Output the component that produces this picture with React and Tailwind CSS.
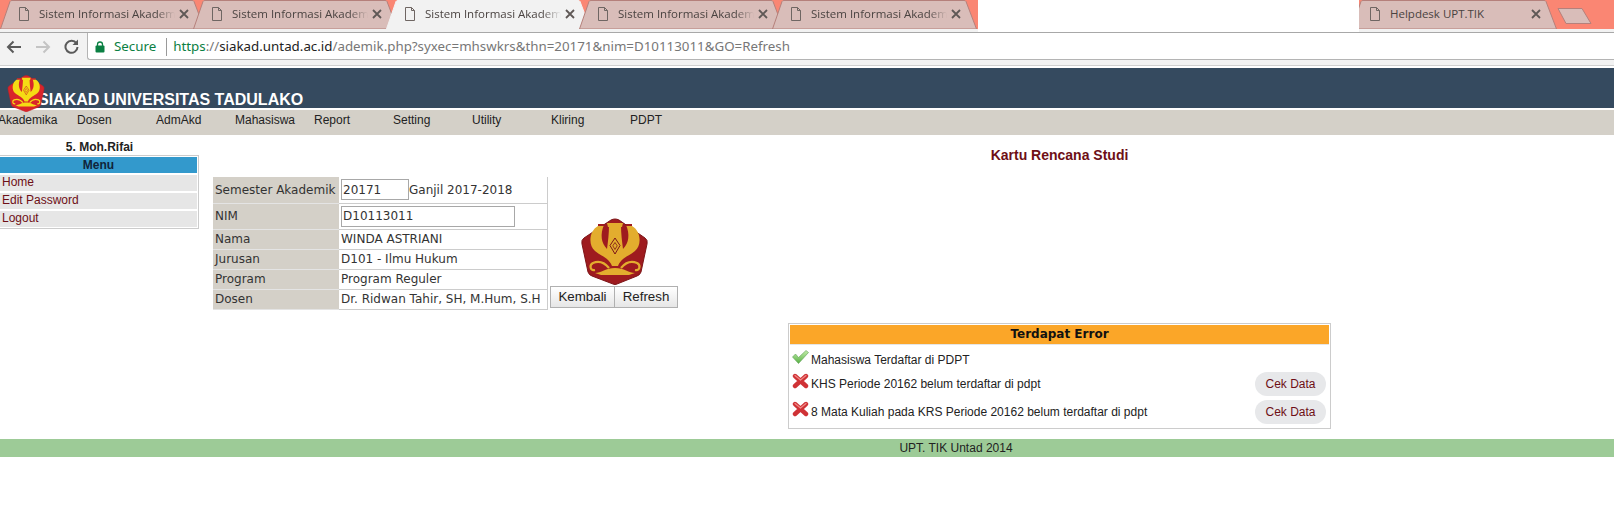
const tabs = ["a", "b", "c", "d", "e"];
const menu = ["Akademika", "Dosen", "AdmAkd", "Mahasiswa", "Report", "Setting", "Utility", "Kliring", "PDPT"];

function PageIcon({ color = "#6f6663" }) {
  return (
    <svg width="12" height="14" viewBox="0 0 12 14" fill="none" stroke={color} strokeWidth="1" className="shrink-0">
      <path d="M1.5 0.5H7.5L10.5 3.5V13.5H1.5Z" />
      <path d="M7.5 0.5V3.5H10.5" />
    </svg>
  );
}

function Tab({ title, active, width = 205, fade = true }) {
  const fill = active ? "#f2f2f2" : "#d9bdb9";
  const line = active ? "#f2f2f2" : "#b5807b";
  return (
    <div className="relative h-[29px] shrink-0 -mr-[12px]" style={{ width }}>
      <svg className="absolute inset-0" width={width} height="29" viewBox={`0 0 ${width} 29`}>
        <path d={`M0.5 29 L10 1.5 Q10.5 0.5 12 0.5 H${width - 13} Q${width - 11.5} 0.5 ${width - 11} 1.5 L${width - 0.5} 29Z`} fill={fill} stroke={line} />
      </svg>
      <div className="relative flex items-center h-full pl-[18px] pr-[14px] pb-[1px]">
        <PageIcon />
        <div
          className={
            "ml-[9px] w-[136px] text-[11.5px] leading-none text-[#4a4341] font-['Open_Sans',sans-serif] whitespace-nowrap" +
            (fade ? " [mask-image:linear-gradient(to_right,black_86%,transparent)]" : "")
          }
        >
          {title}
        </div>
        <svg width="10" height="10" viewBox="0 0 10 10" stroke="#5f5856" strokeWidth="1.8" className="ml-auto mr-[2px]">
          <path d="M1 1L9 9M9 1L1 9" />
        </svg>
      </div>
    </div>
  );
}

function Logo({ className, base, gold, slot }) {
  return (
    <svg viewBox="0 0 67 67" className={className}>
      <path d="M34 1 Q36 1 38 2 L64 20 Q67 22 66 26 L60 54 Q59 57 56 58 L36 66 Q34 67 32 66 L11 58 Q8 57 7 54 L1 26 Q0 22 3 20 L30 2 Q32 1 34 1Z" fill={base} stroke={slot} strokeWidth="1" />
      {/* arms and body as one shape */}
      <path d="M17 8 C8 13 7 27 14 33 C20 38 28 40 31 48 H37 C40 40 48 38 54 33 C61 27 60 13 51 8Z" fill={gold} />
      {/* slots between the arms and the vase */}
      <path d="M23 7 C19 16 20 25 26 31 C27 23 28 16 28 7Z" fill={base} />
      <path d="M45 7 C49 16 48 25 42 31 C41 23 40 16 40 7Z" fill={base} />
      {/* neck */}
      <path d="M26 5 H42 L41 9 H27Z" fill={gold} />
      <path d="M17 6 H23 V8 H17Z M45 6 H51 V8 H45Z" fill={base} />
      <path d="M34 20 L39 27.500 L34 36 L29 27.500Z" fill="none" stroke={slot} strokeWidth="1" />
      <path d="M34 24.500 L36.200 27.800 L34 31.500 L31.800 27.800Z" fill="none" stroke={slot} strokeWidth="0.8" />
      {/* curls and base */}
      <path d="M28 50 C23 44 17 43 12 45 C8 47 9 53 14 52 M40 50 C45 44 51 43 56 45 C60 47 59 53 54 52" fill="none" stroke={gold} strokeWidth="2.2" />
      <path d="M14 55 C20 55 25 50 34 50 C43 50 48 55 54 55 L48 57 H20Z" fill={gold} />
    </svg>
  );
}

function CheckIcon() {
  return (
    <svg width="17" height="14" viewBox="0 0 17 14" className="shrink-0">
      <defs>
        <linearGradient id="chk" x1="0" y1="0" x2="0" y2="1">
          <stop offset="0" stopColor="#c4eeaa" />
          <stop offset="1" stopColor="#56b044" />
        </linearGradient>
      </defs>
      <path d="M0.500 7 L3.500 4 L6.500 7.500 L14 0.500 L16.500 2.500 L6.500 13.500Z" fill="url(#chk)" stroke="#5f9f55" strokeWidth="0.6" />
    </svg>
  );
}

function CrossIcon() {
  return (
    <svg width="17" height="16" viewBox="0 0 17 16" className="shrink-0">
      <path d="M3 3L14 13M14 3L3 13" stroke="#cf3236" strokeWidth="4.4" strokeLinecap="round" />
      <path d="M3 2.500L8.500 7M14 2.500L8.500 7" stroke="#f08a86" strokeWidth="1.2" strokeLinecap="round" />
    </svg>
  );
}

function Toolbar() {
  return (
    <div className="h-[33px] flex bg-[#f2f2f2] border-b border-[#d0d0d0]">
      <div className="w-[87px] shrink-0 flex items-center pl-[6px] gap-[13px] pb-[5px]">
        <svg width="16" height="14" viewBox="0 0 16 14" fill="none" stroke="#5a5a5a" strokeWidth="2">
          <path d="M15 7H2M7.500 1.500L2 7L7.500 12.500" />
        </svg>
        <svg width="16" height="14" viewBox="0 0 16 14" fill="none" stroke="#c4c4c4" strokeWidth="2">
          <path d="M1 7H14M8.500 1.500L14 7L8.500 12.500" />
        </svg>
        <svg width="15" height="15" viewBox="0 0 15 15" fill="none" stroke="#5a5a5a" strokeWidth="2">
          <path d="M12.500 4.500A6 6 0 1 0 13.500 8" />
          <path d="M14 0.500V6H8.500Z" fill="#5a5a5a" stroke="none" />
        </svg>
      </div>
      <div className="flex-1 h-[27px] bg-white border-b border-l border-[#b4b4b4] rounded-bl-[3px] flex items-center pl-[7px] pt-[2px] font-['Noto_Sans',sans-serif] text-[13.33px] whitespace-nowrap">
        <svg width="10" height="12" viewBox="0 0 10 12" className="shrink-0 mr-[9px]">
          <rect x="0.500" y="4.500" width="9" height="7" rx="1" fill="#0b8043" />
          <path d="M2.500 5V3.500A2.500 2.500 0 0 1 7.500 3.500V5" fill="none" stroke="#0b8043" strokeWidth="1.300" />
        </svg>
        <span className="text-[#0b8043]">Secure</span>
        <span className="w-px h-[18px] bg-[#9a9a9a] ml-[10px] mr-[6px]"></span>
        <span className="text-[#0b8043]">https</span>
        <span className="text-[#777]">://</span>
        <span className="text-[#222]">siakad.untad.ac.id</span>
        <span className="text-[#777]">/ademik.php?syxec=mhswkrs&amp;thn=20171&amp;nim=D10113011&amp;GO=Refresh</span>
      </div>
    </div>
  );
}

function TabStrip() {
  return (
    <div className="h-[33px] bg-[#f2f2f2] border-b border-[#a8a8a8] flex items-start overflow-hidden">
      <div className="flex h-[29px] w-[978px] shrink-0 bg-[#fa8673] overflow-hidden">
        {tabs.map((t, i) => (
          <Tab key={t} title="Sistem Informasi Akadem" active={i === 2} />
        ))}
      </div>
      <div className="w-[381px] h-[32px] shrink-0 bg-white"></div>
      <div className="flex-1 h-[29px] bg-[#fa8673] flex overflow-hidden">
        <div className="-ml-[8px]">
          <Tab title="Helpdesk UPT.TIK" width={206} fade={false} />
        </div>
        <svg width="36" height="18" viewBox="0 0 36 18" className="mt-[7px] ml-[12px] shrink-0">
          <path d="M1 1.500H25L34 16.500H9Z" fill="#d9bdb9" stroke="#b5807b" strokeLinejoin="round" />
        </svg>
      </div>
    </div>
  );
}

function Sidebar() {
  return (
    <div className="w-[199px] shrink-0 font-['Liberation_Sans',sans-serif] text-[12px]">
      <div className="h-[20px] flex items-end justify-center font-bold text-[#222] leading-[15px]">5. Moh.Rifai</div>
      <div className="border border-[#cccccc] border-l-0 h-[74px] py-px pr-px">
        <div className="h-[16px] bg-[#3399cc] text-center font-bold leading-[16px] text-[#10243a]">Menu</div>
        {["Home", "Edit Password", "Logout"].map((m) => (
          <div key={m} className="h-[16px] mt-[2px] pl-[2px] bg-[#e6e6e6] leading-[15px] text-[#6e0f16]">
            {m}
          </div>
        ))}
      </div>
    </div>
  );
}

function FormTable() {
  const label = "bg-[#d4d0c8] border-b border-[#e4e4e4] pl-[2px] text-[#333]";
  const value = "border-b border-r border-[#cccccc] pl-[2px] text-[#333] whitespace-nowrap";
  return (
    <table className="w-[335px] border-collapse font-['DejaVu_Sans',sans-serif] text-[12px] self-start">
      <tbody>
        <tr className="h-[26px]">
          <td className={label + " w-[126px]"}>Semester Akademik</td>
          <td className={value}>
            <span className="flex items-center">
              <span className="w-[68px] h-[21px] border border-[#a8a8a8] flex items-center pl-[1px]">20171</span>
              <span>Ganjil 2017-2018</span>
            </span>
          </td>
        </tr>
        <tr className="h-[26px]">
          <td className={label}>NIM</td>
          <td className={value}>
            <span className="w-[174px] h-[21px] border border-[#a8a8a8] flex items-center pl-[1px]">D10113011</span>
          </td>
        </tr>
        <tr className="h-[20px]">
          <td className={label}>Nama</td>
          <td className={value}>WINDA ASTRIANI</td>
        </tr>
        <tr className="h-[20px]">
          <td className={label}>Jurusan</td>
          <td className={value}>D101 - Ilmu Hukum</td>
        </tr>
        <tr className="h-[20px]">
          <td className={label}>Program</td>
          <td className={value}>Program Reguler</td>
        </tr>
        <tr className="h-[20px]">
          <td className={label}>Dosen</td>
          <td className={value}>Dr. Ridwan Tahir, SH, M.Hum, S.H</td>
        </tr>
      </tbody>
    </table>
  );
}

function ErrorRow({ ok, text, tall }) {
  return (
    <div className={"flex items-center pl-[2px] pr-[3px] " + (tall ? "h-[32px]" : "h-[24px]")}>
      <div className="w-[17px] -mt-[6px] mr-[2px]">{ok ? <CheckIcon /> : <CrossIcon />}</div>
      <span className="text-[#222]">{text}</span>
      {!ok && (
        <span className="ml-auto w-[71px] h-[24px] rounded-full bg-[#e7e8ea] text-[#6e0f16] flex items-center justify-center">
          Cek Data
        </span>
      )}
    </div>
  );
}

export default function App() {
  return (
    <div className="bg-white min-h-screen">
      <TabStrip />
      <Toolbar />
      <div className="h-[2px] bg-white"></div>
      <div className="relative h-[40px] bg-[#354a5f] flex items-end pl-[38px] font-['Liberation_Sans',sans-serif] font-bold text-[16px] leading-[16px] text-white">
        <span>SIAKAD UNIVERSITAS TADULAKO</span>
        <Logo className="absolute left-[7px] top-[7px] w-[38px] h-[37px]" base="#d9252a" gold="#f5dc14" slot="#c91f24" />
      </div>
      <div className="h-[2px] bg-white"></div>
      <div className="h-[25px] bg-[#d4d0c8] flex -ml-[2px] pt-[2px] font-['Liberation_Sans',sans-serif] text-[12px] text-[#222]">
        {menu.map((m) => (
          <div key={m} className="w-[79px] leading-[16px]">
            {m}
          </div>
        ))}
      </div>

      <div className="flex h-[304px]">
        <Sidebar />
        <div className="flex ml-[14px] mt-[42px] w-[465px] shrink-0 h-[132px]">
          <FormTable />
          <div className="ml-[2px] flex flex-col items-center self-start">
            <Logo className="w-[67px] h-[67px] mt-[41px]" base="#9e1b1f" gold="#e3ad2e" slot="#7d1518" />
            <div className="flex mt-[1px] font-['Liberation_Sans',sans-serif] text-[13.33px] text-[#222]">
              <div className="w-[65px] h-[22px] border border-[#b0b0b0] bg-gradient-to-b from-white to-[#e6e6e6] flex items-center justify-center">Kembali</div>
              <div className="w-[63px] h-[22px] border border-l-0 border-[#b0b0b0] bg-gradient-to-b from-white to-[#e6e6e6] flex items-center justify-center">Refresh</div>
            </div>
          </div>
        </div>
        <div className="ml-[110px] w-[543px] shrink-0 font-['Liberation_Sans',sans-serif] text-[12px]">
          <div className="mt-[12px] h-[16px] text-center font-bold text-[14px] leading-[16px] text-[#6e0f16]">Kartu Rencana Studi</div>
          <div className="mt-[160px] h-[106px] border border-[#cccccc] p-px">
            <div className="h-[20px] bg-[#fba628] border-b border-[#e5e5e5] text-center font-['DejaVu_Sans',sans-serif] font-bold text-[12px] leading-[19px] text-[#111]">
              Terdapat Error
            </div>
            <div className="pt-[3px]">
              <ErrorRow ok text="Mahasiswa Terdaftar di PDPT" />
              <ErrorRow text="KHS Periode 20162 belum terdaftar di pdpt" />
              <ErrorRow tall text="8 Mata Kuliah pada KRS Periode 20162 belum terdaftar di pdpt" />
            </div>
          </div>
        </div>
      </div>

      <div className="h-[18px] bg-[#9dcb97] pl-[298px] text-center font-['Liberation_Sans',sans-serif] text-[12px] leading-[18px] text-[#222]">
        UPT. TIK Untad 2014
      </div>
    </div>
  );
}
